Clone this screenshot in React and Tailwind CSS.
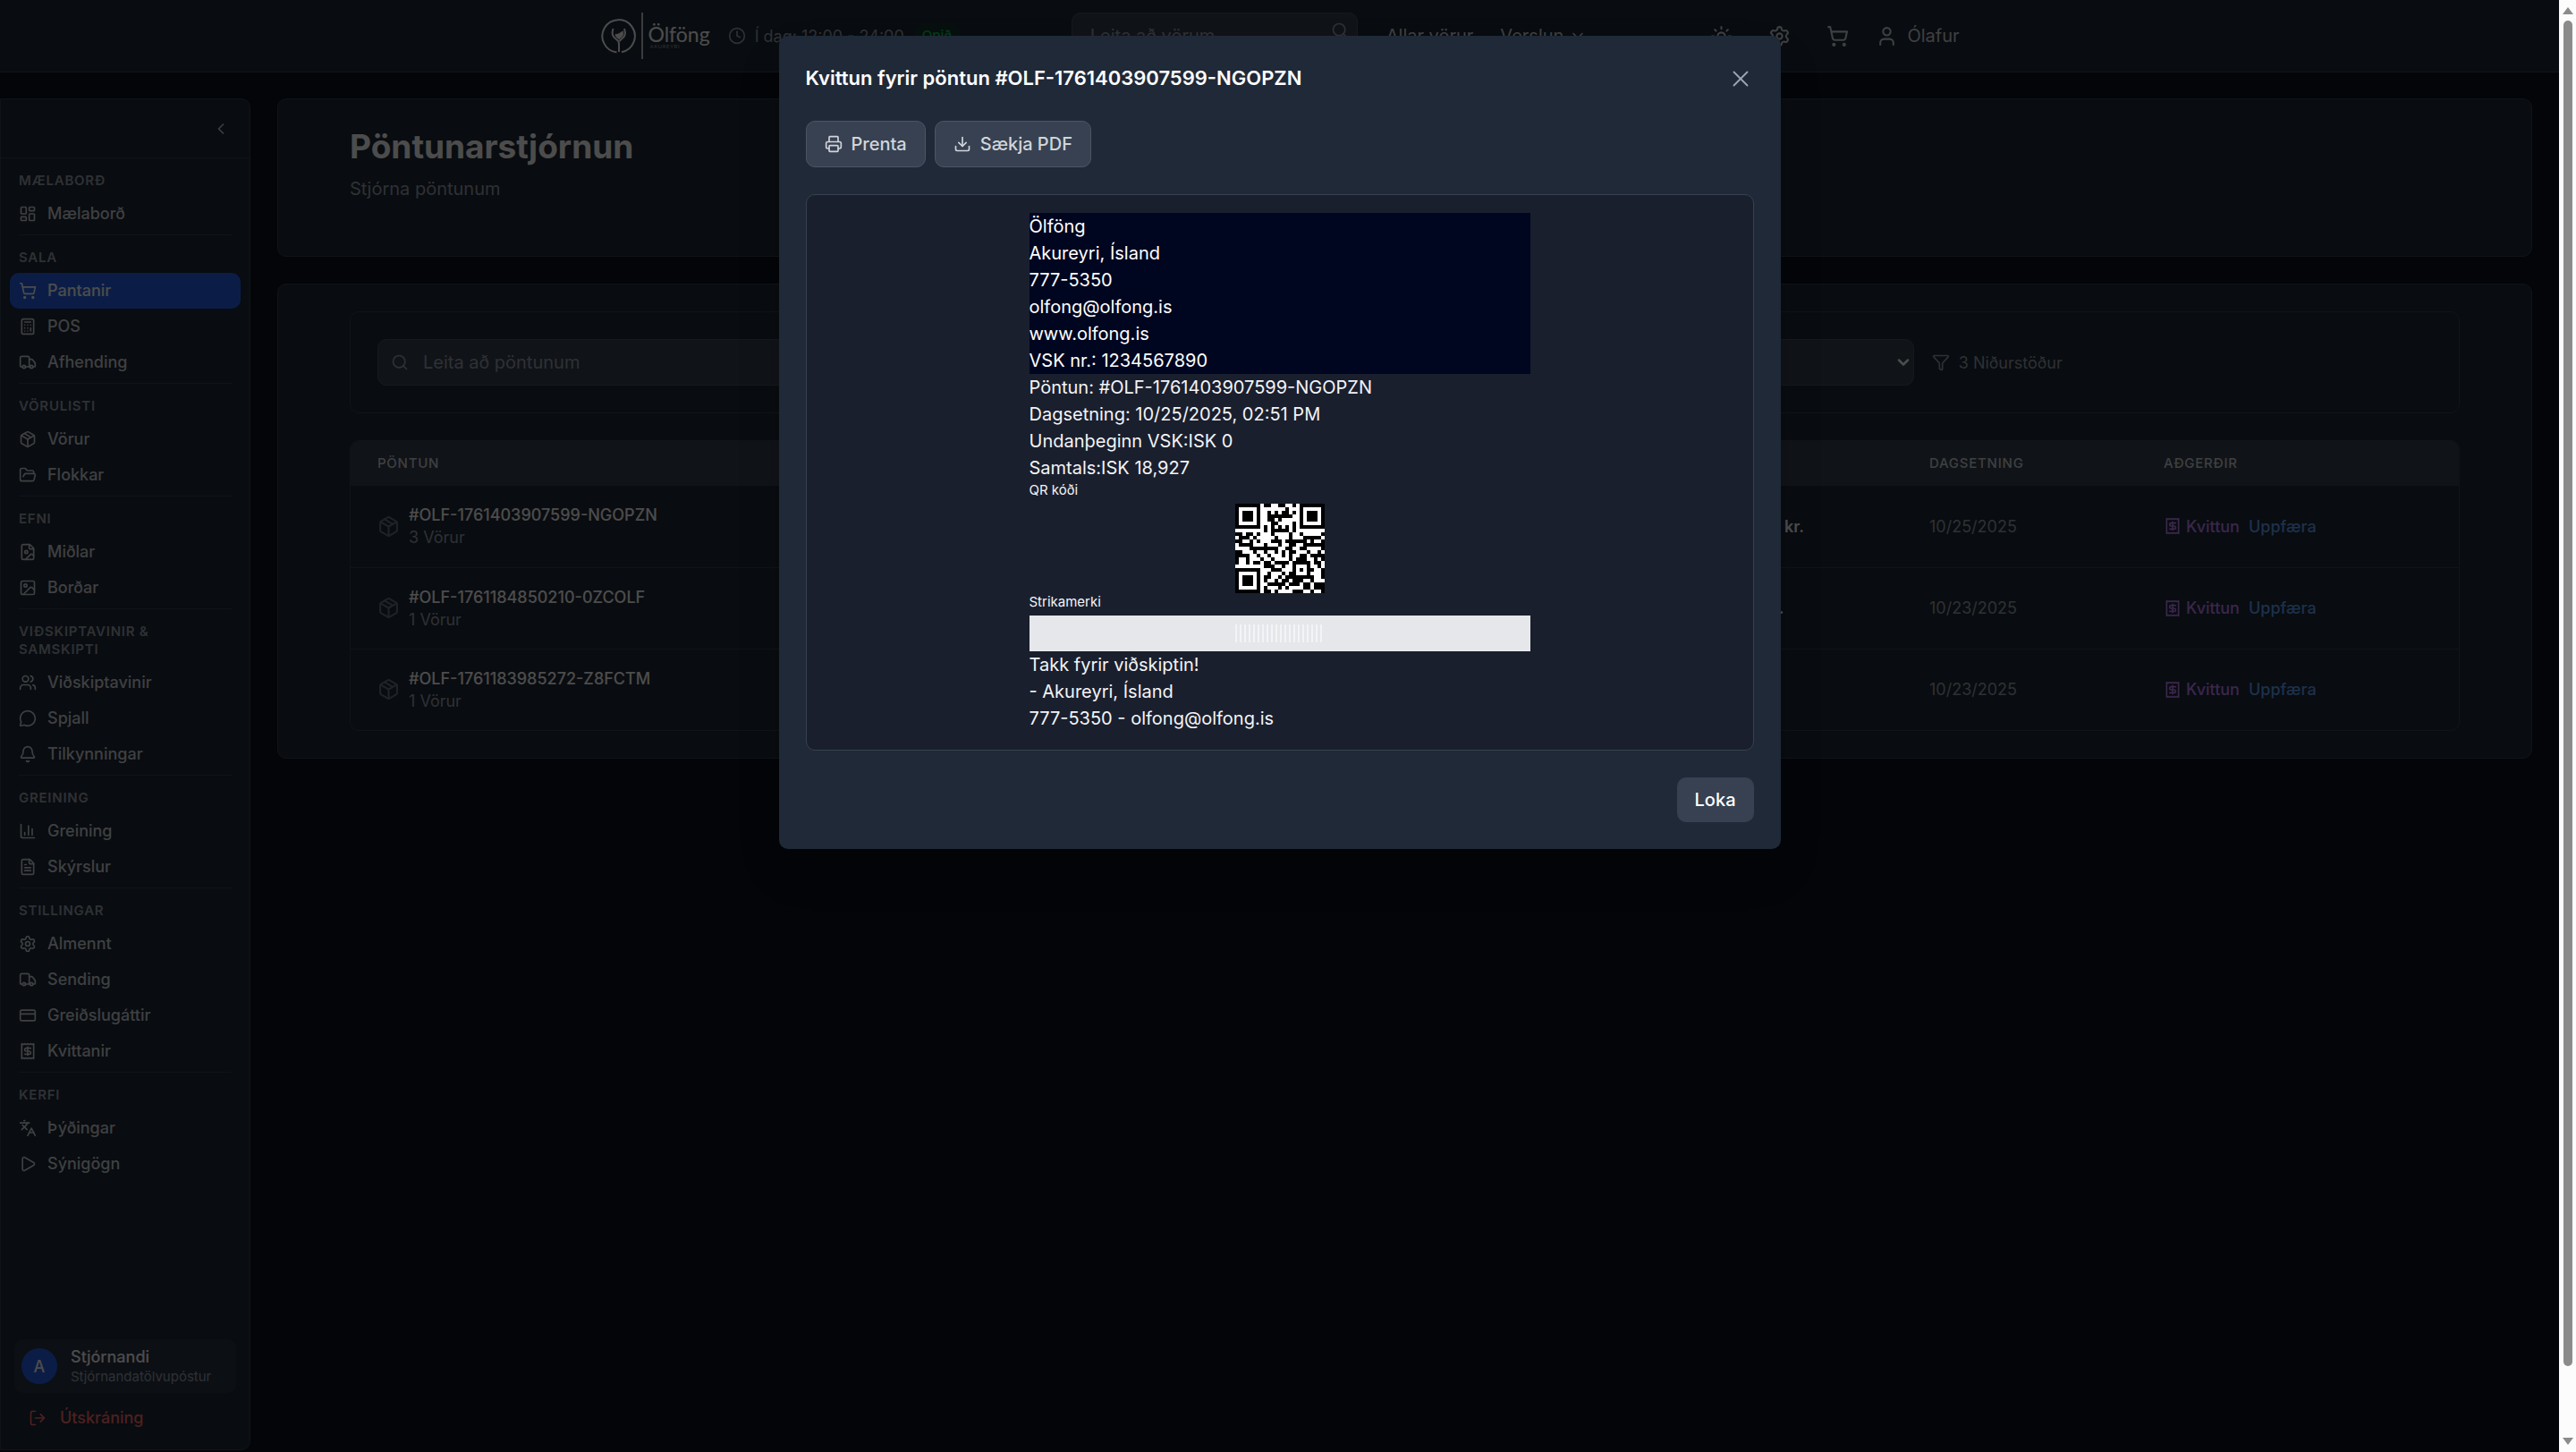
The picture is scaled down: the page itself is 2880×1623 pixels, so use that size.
import {
  LayoutDashboard, ShoppingCart, Calculator, Truck, Package, FolderOpen, FileImage, Image, Users,
  MessageCircle, Bell, ChartColumn, FileText, Settings, CreditCard, Receipt, Languages, Play,
  LogOut, ChevronLeft, ChevronDown, Search, Funnel, Sun, User, Clock, Printer, Download, X,
} from "lucide-react";

/* ---------- QR code (version 2, level L, mask 6) ---------- */

const SIZE = 25;
const DATA_BYTES = 34;
const EC_BYTES = 10;
const FORMAT = 0b110110001000001;

function gfMul(a, b) {
  let r = 0;
  while (b) {
    if (b & 1) r ^= a;
    a <<= 1;
    if (a & 256) a ^= 0x11d;
    b >>= 1;
  }
  return r;
}

function errorBytes(data) {
  let gen = [1];
  let root = 1;
  for (let i = 0; i < EC_BYTES; i++) {
    const next = new Array(gen.length + 1).fill(0);
    gen.forEach((g, j) => {
      next[j] ^= g;
      next[j + 1] ^= gfMul(g, root);
    });
    gen = next;
    root = gfMul(root, 2);
  }
  const rem = [...data, ...new Array(EC_BYTES).fill(0)];
  for (let i = 0; i < data.length; i++) {
    const f = rem[i];
    gen.forEach((g, j) => (rem[i + j] ^= gfMul(g, f)));
  }
  return rem.slice(data.length);
}

function qrMatrix(text) {
  let bits = "0100" + text.length.toString(2).padStart(8, "0");
  for (const ch of text) bits += ch.charCodeAt(0).toString(2).padStart(8, "0");
  bits += "0000".slice(0, DATA_BYTES * 8 - bits.length);
  const data = [];
  for (let i = 0; i < bits.length; i += 8) data.push(parseInt(bits.slice(i, i + 8).padEnd(8, "0"), 2));
  for (let pad = 0xec; data.length < DATA_BYTES; pad ^= 0xfd) data.push(pad);
  const stream = [...data, ...errorBytes(data)].map((b) => b.toString(2).padStart(8, "0")).join("");

  const m = Array.from({ length: SIZE }, () => new Array(SIZE).fill(null));
  const finder = (r0, c0) => {
    for (let r = -1; r < 8; r++)
      for (let c = -1; c < 8; c++) {
        if (!m[r0 + r] || m[r0 + r][c0 + c] === undefined) continue;
        const d = Math.max(Math.abs(r - 3), Math.abs(c - 3));
        m[r0 + r][c0 + c] = d !== 2 && d !== 4;
      }
  };
  finder(0, 0);
  finder(0, SIZE - 7);
  finder(SIZE - 7, 0);
  for (let r = -2; r < 3; r++)
    for (let c = -2; c < 3; c++) m[18 + r][18 + c] = Math.max(Math.abs(r), Math.abs(c)) !== 1;
  for (let i = 8; i < SIZE - 8; i++) m[6][i] = m[i][6] = i % 2 === 0;
  for (let i = 0; i < 15; i++) {
    const bit = ((FORMAT >> i) & 1) === 1;
    if (i < 6) m[i][8] = bit;
    else if (i < 8) m[i + 1][8] = bit;
    else if (i === 8) m[8][7] = bit;
    else m[8][14 - i] = bit;
    if (i < 8) m[8][SIZE - 1 - i] = bit;
    else m[SIZE - 15 + i][8] = bit;
  }
  m[SIZE - 8][8] = true;

  let k = 0;
  let up = true;
  for (let right = SIZE - 1; right > 0; right -= 2) {
    if (right === 6) right = 5;
    for (let i = 0; i < SIZE; i++) {
      const r = up ? SIZE - 1 - i : i;
      for (const c of [right, right - 1]) {
        if (m[r][c] !== null) continue;
        const flip = (((r * c) % 2) + ((r * c) % 3)) % 2 === 0;
        m[r][c] = (stream[k++] === "1") !== flip;
      }
    }
    up = !up;
  }
  return m;
}

function QrCode({ text }) {
  const path = qrMatrix(text)
    .flatMap((row, r) => row.map((on, c) => (on ? `M${c} ${r}h1v1h-1z` : "")))
    .join("");
  return (
    <svg viewBox="0 0 25 25" className="mx-auto size-25" shapeRendering="crispEdges" role="img" aria-label="QR kóði">
      <rect width="25" height="25" fill="#fff" />
      <path d={path} fill="#000" />
    </svg>
  );
}

/* ---------- Header ---------- */

function Logo() {
  return (
    <a href="#" className="flex items-center text-white">
      <svg viewBox="0 0 48 52" className="h-[52px] w-12" fill="none" stroke="currentColor">
        <path d="M18.500 44.400a18.200 18.200 0 1 1 5.500-.2" strokeWidth="2" />
        <path d="M14.500 18c-2 5.500-.5 9.500 3.500 12 2.500 1.500 3 2.500 3 5v9" strokeWidth="2" />
        <path d="M27 18c2 5.500 .5 9.500-3.500 12l-2 2" strokeWidth="2" />
        <path d="M17 24.500c3 .5 5-1.500 8.500-3.500 .5 4-1 7-4.500 8.500-2-.8-3.700-2.500-4-5z" fill="currentColor" strokeWidth="1" />
        <path d="M47 0v52" strokeWidth="1.500" />
      </svg>
      <span className="ml-1.5 flex flex-col">
        <span className="font-[Lato,sans-serif] text-[23px] leading-6">Ölföng</span>
        <span className="pl-0.5 font-[Lato,sans-serif] text-[6px] leading-1 tracking-widest text-[#9ca3af]">AKUREYRI</span>
      </span>
    </a>
  );
}

function Header() {
  return (
    <header className="border-b border-[#374151] bg-[#1f2937]">
      <div className="mx-auto flex h-20 max-w-[1600px] items-center px-10 text-[#d1d5db]">
        <Logo />
        <div className="ml-5 flex items-center gap-2.5 text-[18px] whitespace-nowrap text-[#9ca3af]">
          <Clock className="size-5" />
          <span>Í dag: 12:00 - 24:00</span>
          <span className="rounded-full bg-green-900/30 px-2.5 py-1 text-[15px] font-medium text-green-500">Opið</span>
        </div>
        <div className="relative ml-auto">
          <input
            type="search"
            aria-label="Leita að vörum"
            placeholder="Leita að vörum"
            className="h-13 w-80 rounded-[10px] border border-[#4b5563] bg-[#374151] px-5 text-xl placeholder:text-[#9ca3af]"
          />
          <Search className="absolute top-2.5 right-2.5 size-5 text-[#9ca3af]" />
        </div>
        <nav className="ml-8 flex items-center gap-7.5 text-xl">
          <a href="#">Allar vörur</a>
          <button className="flex items-center gap-1.5">
            Verslun <ChevronDown className="size-5" />
          </button>
        </nav>
        <div className="ml-[138px] flex items-center gap-10">
          <button aria-label="Þema"><Sun className="size-[25px]" /></button>
          <button aria-label="Stillingar"><Settings className="size-[25px]" /></button>
          <button aria-label="Karfa"><ShoppingCart className="size-[25px]" /></button>
        </div>
        <button className="ml-7.5 flex items-center gap-2.5 text-xl">
          <User className="size-[25px]" />
          Ólafur
        </button>
      </div>
    </header>
  );
}

/* ---------- Sidebar ---------- */

const SECTIONS = [
  { title: "Mælaborð", items: [["Mælaborð", LayoutDashboard]] },
  { title: "Sala", items: [["Pantanir", ShoppingCart, true], ["POS", Calculator], ["Afhending", Truck]] },
  { title: "Vörulisti", items: [["Vörur", Package], ["Flokkar", FolderOpen]] },
  { title: "Efni", items: [["Miðlar", FileImage], ["Borðar", Image]] },
  { title: "Viðskiptavinir & samskipti", items: [["Viðskiptavinir", Users], ["Spjall", MessageCircle], ["Tilkynningar", Bell]] },
  { title: "Greining", items: [["Greining", ChartColumn], ["Skýrslur", FileText]] },
  { title: "Stillingar", items: [["Almennt", Settings], ["Sending", Truck], ["Greiðslugáttir", CreditCard], ["Kvittanir", Receipt]] },
  { title: "Kerfi", items: [["Þýðingar", Languages], ["Sýnigögn", Play]] },
];

function Sidebar() {
  return (
    <aside className="flex w-70 shrink-0 flex-col rounded-r-[10px] border border-[#374151] bg-[#1f2937]">
      <div className="flex h-[66px] items-center justify-end border-b border-[#374151] px-5.5">
        <button aria-label="Fella saman" className="text-[#d1d5db]"><ChevronLeft className="size-5" /></button>
      </div>
      <nav className="px-2.5 pt-[15px]">
        {SECTIONS.map((section, i) => (
          <div key={section.title}>
            <h3 className="mb-[7px] px-2.5 text-[15px] leading-5 font-semibold tracking-wider text-[#9ca3af] uppercase">{section.title}</h3>
            {section.items.map(([label, Icon, active]) => (
              <a
                key={label}
                href="#"
                className={
                  active
                    ? "flex h-10 items-center gap-3 rounded-[10px] bg-[#2563eb] px-2.5 text-[18px] leading-6 font-medium text-white"
                    : "flex h-10 items-center gap-3 rounded-[10px] px-2.5 text-[18px] leading-6 font-medium text-[#d1d5db]"
                }
              >
                <Icon className="size-5" />
                {label}
              </a>
            ))}
            {i < SECTIONS.length - 1 && <hr className="mx-2.5 mt-[3px] mb-[15px] border-[#374151]" />}
          </div>
        ))}
      </nav>
      <div className="mt-auto px-[15px] pb-[15px]">
        <div className="flex h-15 items-center gap-[15px] rounded-[10px] bg-[#374151]/50 px-2">
          <span className="flex size-10 items-center justify-center rounded-full bg-[#2563eb] text-[18px] font-medium text-white">A</span>
          <div className="min-w-0">
            <p className="text-[18px] leading-6 font-medium text-white">Stjórnandi</p>
            <p className="text-[15px] leading-5 text-[#9ca3af]">Stjórnandatölvupóstur</p>
          </div>
        </div>
        <button className="mt-2 flex h-10 items-center gap-[15px] px-4 text-[18px] leading-6 font-medium text-[#f87171]">
          <LogOut className="size-5" />
          Útskráning
        </button>
      </div>
    </aside>
  );
}

/* ---------- Orders ---------- */

const ORDERS = [
  { id: "#OLF-1761403907599-NGOPZN", count: "3 Vörur", customer: "Ólafur", status: "Í vinnslu", total: "18.927 kr.", date: "10/25/2025" },
  { id: "#OLF-1761184850210-0ZCOLF", count: "1 Vörur", customer: "Ólafur", status: "Afhent", total: "990 kr.", date: "10/23/2025" },
  { id: "#OLF-1761183985272-Z8FCTM", count: "1 Vörur", customer: "Ólafur", status: "Afhent", total: "90 kr.", date: "10/23/2025" },
];

function Orders() {
  return (
    <main className="flex min-w-0 flex-1 flex-col gap-7.5">
      <section className="rounded-[10px] border border-[#374151] bg-[#1f2937] px-20 pt-7.5 pb-15">
        <h1 className="text-[37px] leading-[45px] font-bold text-white">Pöntunarstjórnun</h1>
        <p className="mt-2.5 text-xl leading-[30px] text-[#9ca3af]">Stjórna pöntunum</p>
      </section>
      <section className="rounded-[10px] border border-[#374151] bg-[#1f2937] px-20 py-7.5">
        <div className="grid grid-cols-4 gap-5 rounded-[10px] border border-[#374151] p-7.5">
          <div className="relative col-span-2">
            <Search className="absolute top-4 left-[15px] size-5 text-[#9ca3af]" />
            <input
              type="search"
              aria-label="Leita að pöntunum"
              placeholder="Leita að pöntunum"
              className="h-13 w-full rounded-[10px] border border-[#4b5563] bg-[#374151] pl-[50px] text-xl placeholder:text-[#9ca3af]"
            />
          </div>
          <div className="relative">
            <select aria-label="Staða" className="h-13 w-full appearance-none rounded-[10px] border border-[#4b5563] bg-[#374151] px-[15px] text-xl text-white">
              <option>Allar stöður</option>
            </select>
            <ChevronDown className="pointer-events-none absolute top-4 right-0.5 size-5 text-white" strokeWidth={3} />
          </div>
          <div className="flex items-center gap-2.5 text-[18px] text-[#9ca3af]">
            <Funnel className="size-5" />
            3 Niðurstöður
          </div>
        </div>
        <div className="mt-7.5 overflow-hidden rounded-[10px] border border-[#374151]">
          <table className="w-full table-fixed text-left text-[18px]">
            <colgroup>
              <col />
              <col />
              <col />
              <col className="w-[224px]" />
              <col className="w-[262px]" />
              <col className="w-[360px]" />
            </colgroup>
            <thead className="bg-[#374151] text-[15px] tracking-wider text-[#d1d5db] uppercase">
              <tr className="h-[50px]">
                {["Pöntun", "Kaupandi", "Staða", "Verð", "Dagsetning", "Aðgerðir"].map((h) => (
                  <th key={h} className="px-7.5 font-medium">{h}</th>
                ))}
              </tr>
            </thead>
            <tbody className="divide-y divide-[#374151]">
              {ORDERS.map((o) => (
                <tr key={o.id} className="h-[91px]">
                  <td className="px-7.5">
                    <div className="flex items-center gap-2.5">
                      <Package className="size-[25px] text-[#6b7280]" />
                      <div className="leading-[25px]">
                        <div className="font-medium text-white">{o.id}</div>
                        <div className="text-[#9ca3af]">{o.count}</div>
                      </div>
                    </div>
                  </td>
                  <td className="px-7.5 text-white">{o.customer}</td>
                  <td className="px-7.5 text-[#d1d5db]">{o.status}</td>
                  <td className="px-7.5 font-semibold text-white">{o.total}</td>
                  <td className="px-7.5 text-[#9ca3af]">{o.date}</td>
                  <td className="px-7.5 font-medium">
                    <div className="flex items-center gap-2.5">
                      <button className="flex items-center gap-[5px] text-[#c084fc]">
                        <Receipt className="size-5" />
                        Kvittun
                      </button>
                      <button className="text-[#60a5fa]">Uppfæra</button>
                    </div>
                  </td>
                </tr>
              ))}
            </tbody>
          </table>
        </div>
      </section>
    </main>
  );
}

/* ---------- Receipt dialog ---------- */

function ReceiptDialog() {
  return (
    <div
      role="dialog"
      aria-modal="true"
      aria-labelledby="receipt-title"
      className="flex w-full max-w-[1120px] flex-col gap-7.5 rounded-[10px] bg-[#1f2937] p-7.5 shadow-2xl"
    >
      <div className="flex items-center justify-between">
        <h2 id="receipt-title" className="text-[22px] leading-[35px] font-semibold text-white">
          Kvittun fyrir pöntun #OLF-1761403907599-NGOPZN
        </h2>
        <button aria-label="Loka glugga" className="text-[#9ca3af]"><X className="size-[30px]" strokeWidth={1.5} /></button>
      </div>
      <div className="flex gap-2.5">
        <button className="flex h-13 items-center gap-2.5 rounded-[10px] border border-[#4b5563] bg-[#374151] px-5 text-xl font-medium text-[#d1d5db]">
          <Printer className="size-5" />
          Prenta
        </button>
        <button className="flex h-13 items-center gap-2.5 rounded-[10px] border border-[#4b5563] bg-[#374151] px-5 text-xl font-medium text-[#d1d5db]">
          <Download className="size-5" />
          Sækja PDF
        </button>
      </div>
      <div className="rounded-[10px] border border-[#374151] bg-[#1a1f2e] p-5">
        <div className="mx-auto max-w-[560px] text-xl leading-[30px] text-[#f3f4f6]">
          <div className="bg-[#000620] text-white">
            <p>Ölföng</p>
            <p>Akureyri, Ísland</p>
            <p>777-5350</p>
            <p>olfong@olfong.is</p>
            <p>www.olfong.is</p>
            <p>VSK nr.: 1234567890</p>
          </div>
          <p>Pöntun: #OLF-1761403907599-NGOPZN</p>
          <p>Dagsetning: 10/25/2025, 02:51 PM</p>
          <p>Undanþeginn VSK:ISK 0</p>
          <p>Samtals:ISK 18,927</p>
          <p className="mb-[5px] text-[15px] leading-5">QR kóði</p>
          <QrCode text="http://localhost:3001/orders/117" />
          <p className="mb-[5px] text-[15px] leading-5">Strikamerki</p>
          <div className="flex h-10 items-center justify-center bg-[#e5e7eb]">
            <div className="h-5 w-25 bg-[repeating-linear-gradient(90deg,#f3f4f6_0px,#f3f4f6_2px,#e5e7eb_2px,#e5e7eb_5px)]" />
          </div>
          <p>Takk fyrir viðskiptin!</p>
          <p>- Akureyri, Ísland</p>
          <p>777-5350 - olfong@olfong.is</p>
        </div>
      </div>
      <div className="flex justify-end">
        <button className="h-[50px] rounded-[10px] bg-[#374151] px-5 text-xl font-medium text-white">Loka</button>
      </div>
    </div>
  );
}

function Scrollbar() {
  return (
    <div className="flex w-[19px] shrink-0 flex-col items-center bg-[#fcfcfc] py-2" aria-hidden="true">
      <svg viewBox="0 0 14 8" className="h-2 w-3.5"><path d="M7 0l6 8H1z" fill="#8b8b8b" /></svg>
      <div className="mt-[7px] mb-20 w-2.5 flex-1 rounded-full bg-[#8b8b8b]" />
      <svg viewBox="0 0 14 8" className="h-2 w-3.5"><path d="M7 8l6-8H1z" fill="#8b8b8b" /></svg>
    </div>
  );
}

export default function App() {
  return (
    <div className="flex min-h-screen font-[Inter,sans-serif]">
      <div className="relative flex min-w-0 flex-1 flex-col bg-[#0d111c]">
        <Header />
        <div className="flex flex-1 gap-7.5 pt-[29px] pr-7.5 pb-0.5">
          <Sidebar />
          <Orders />
        </div>
        <div className="absolute inset-0 flex items-start justify-center bg-black/70 p-10">
          <ReceiptDialog />
        </div>
      </div>
      <Scrollbar />
    </div>
  );
}
